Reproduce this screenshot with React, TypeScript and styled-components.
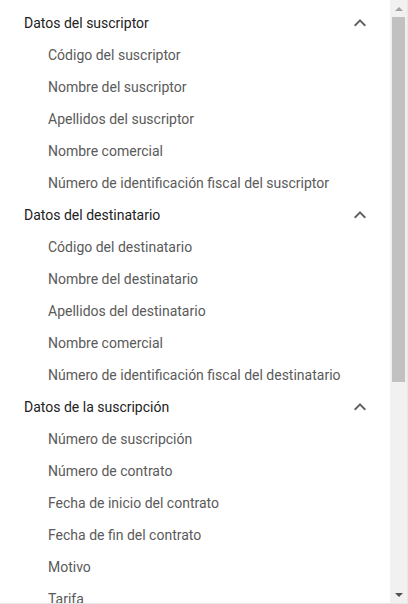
import React from "react";
import styled, { createGlobalStyle } from "styled-components";

const GlobalStyle = createGlobalStyle`
    html, body {
        margin: 0;
        padding: 0;
        background: #ffffff;
    }
    body {
        font-family: Roboto, "Liberation Sans", Arial, sans-serif;
    }
`;

const Frame = styled.div`
    width: 407px;
    height: 603px;
    display: flex;
    border-right: 1px solid #e6e6e6;
    border-bottom: 1px solid #e6e6e6;
    overflow: hidden;
    background: #fff;
`;

const List = styled.div`
    flex: 1;
    overflow: hidden;
    padding-top: 6px;
    display: flex;
    flex-direction: column;
`;

const SectionHeader = styled.div`
    height: 32px;
    flex-shrink: 0;
    display: flex;
    align-items: center;
    padding: 1px 18px 0 24px;
    box-sizing: border-box;
    font-size: 14px;
    color: #222;
    cursor: pointer;
`;

const HeaderLabel = styled.span`
    flex: 1;
`;

const Item = styled.div`
    height: 32px;
    flex-shrink: 0;
    display: flex;
    align-items: center;
    padding-left: 48px;
    padding-top: 1px;
    box-sizing: border-box;
    font-size: 14px;
    color: #5a5a5a;
    white-space: nowrap;
`;

const Scrollbar = styled.div`
    width: 17px;
    flex-shrink: 0;
    background: #f1f1f1;
    display: flex;
    flex-direction: column;
`;

const ArrowButton = styled.div<{ $down?: boolean; $active?: boolean }>`
    height: 17px;
    flex-shrink: 0;
    display: flex;
    align-items: center;
    justify-content: center;

    &::before {
        content: "";
        width: 0;
        height: 0;
        border-left: 4px solid transparent;
        border-right: 4px solid transparent;
        ${(p) => p.$down
            ? `border-top: 4px solid ${p.$active ? "#505050" : "#a3a3a3"};`
            : `border-bottom: 4px solid ${p.$active ? "#505050" : "#a3a3a3"};`}
    }
`;

const Track = styled.div`
    flex: 1;
    padding: 0 2px;
`;

const Thumb = styled.div`
    height: 365px;
    background: #c1c1c1;
`;

const Chevron = () => (
    <svg width="24" height="24" viewBox="0 0 24 24">
        <path d="M12 8l-6 6 1.41 1.41L12 10.83l4.59 4.58L18 14z" fill="#616161" />
    </svg>
);

type Section = {
    title: string,
    fields: string[],
}

const sections: Section[] = [
    {
        title: "Datos del suscriptor",
        fields: [
            "Código del suscriptor",
            "Nombre del suscriptor",
            "Apellidos del suscriptor",
            "Nombre comercial",
            "Número de identificación fiscal del suscriptor",
        ],
    },
    {
        title: "Datos del destinatario",
        fields: [
            "Código del destinatario",
            "Nombre del destinatario",
            "Apellidos del destinatario",
            "Nombre comercial",
            "Número de identificación fiscal del destinatario",
        ],
    },
    {
        title: "Datos de la suscripción",
        fields: [
            "Número de suscripción",
            "Número de contrato",
            "Fecha de inicio del contrato",
            "Fecha de fin del contrato",
            "Motivo",
            "Tarifa",
        ],
    },
];

const App = () => {
    return (
        <>
            <GlobalStyle />
            <Frame>
                <List>
                    {sections.map((section) => (
                        <React.Fragment key={section.title}>
                            <SectionHeader>
                                <HeaderLabel>{section.title}</HeaderLabel>
                                <Chevron />
                            </SectionHeader>
                            {section.fields.map((field) => (
                                <Item key={section.title + field}>{field}</Item>
                            ))}
                        </React.Fragment>
                    ))}
                </List>
                <Scrollbar>
                    <ArrowButton />
                    <Track>
                        <Thumb />
                    </Track>
                    <ArrowButton $down $active />
                </Scrollbar>
            </Frame>
        </>
    );
}

export default App;
